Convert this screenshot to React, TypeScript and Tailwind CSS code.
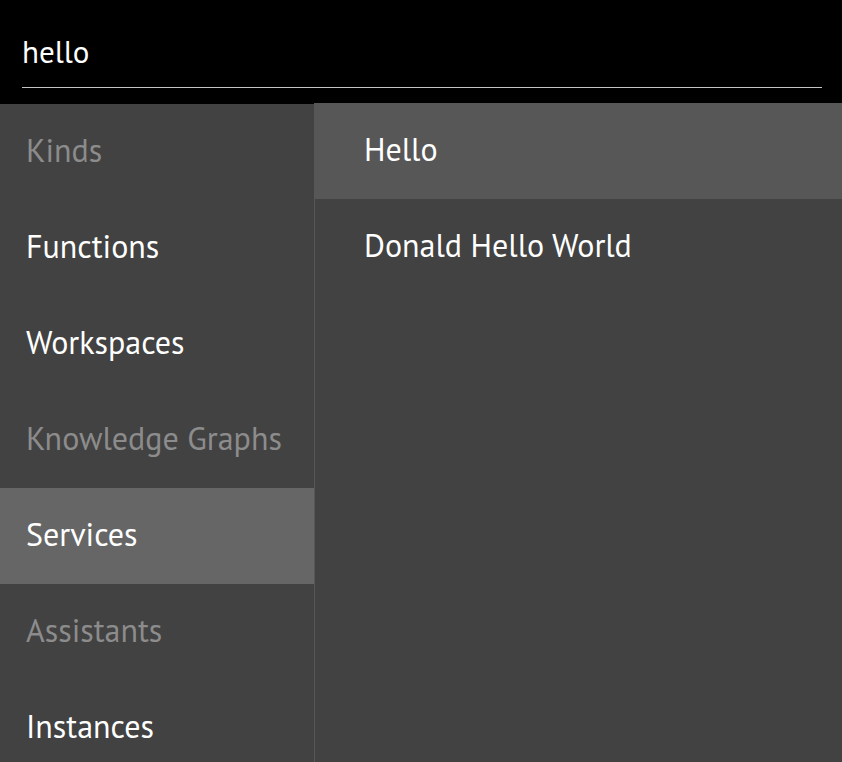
import React from "react";

const kinds = [
  { label: "Kinds", disabled: true },
  { label: "Functions" },
  { label: "Workspaces" },
  { label: "Knowledge Graphs", disabled: true },
  { label: "Services", selected: true },
  { label: "Assistants", disabled: true },
  { label: "Instances" },
];

const results = [
  { label: "Hello", selected: true },
  { label: "Donald Hello World" },
];

export default function App() {
  return (
    <div
      className="w-[842px] h-[762px] overflow-hidden bg-black flex flex-col"
      style={{ fontFamily: "'PT Sans', Lato, 'Liberation Sans', sans-serif" }}
    >
      <div className="h-[103px] shrink-0 pl-[22px] pr-[20px] pt-[30px]">
        <div className="h-[58px] border-b border-[#c4c4c4] flex items-start">
          <input
            defaultValue="hello"
            className="w-full bg-transparent text-white text-[31px] leading-[44px] outline-none"
          />
        </div>
      </div>
      <div className="flex-1 flex min-h-0">
        <div className="w-[314px] shrink-0 bg-[#424242] mt-px flex flex-col">
          {kinds.map((k) => (
            <div
              key={k.label}
              className={
                "h-[96px] shrink-0 flex items-center px-[26px] pb-[4px] text-[32px] " +
                (k.selected ? "bg-[#666666] " : "") +
                (k.disabled ? "text-[#8c8c8c]" : "text-white")
              }
            >
              {k.label}
            </div>
          ))}
        </div>
        <div className="flex-1 bg-[#424242] border-l border-[#575757] flex flex-col">
          {results.map((r) => (
            <div
              key={r.label}
              className={
                "h-[96px] shrink-0 flex items-center pl-[49px] pb-[4px] text-[32px] text-white " +
                (r.selected ? "bg-[#575757]" : "")
              }
            >
              {r.label}
            </div>
          ))}
        </div>
      </div>
    </div>
  );
}
